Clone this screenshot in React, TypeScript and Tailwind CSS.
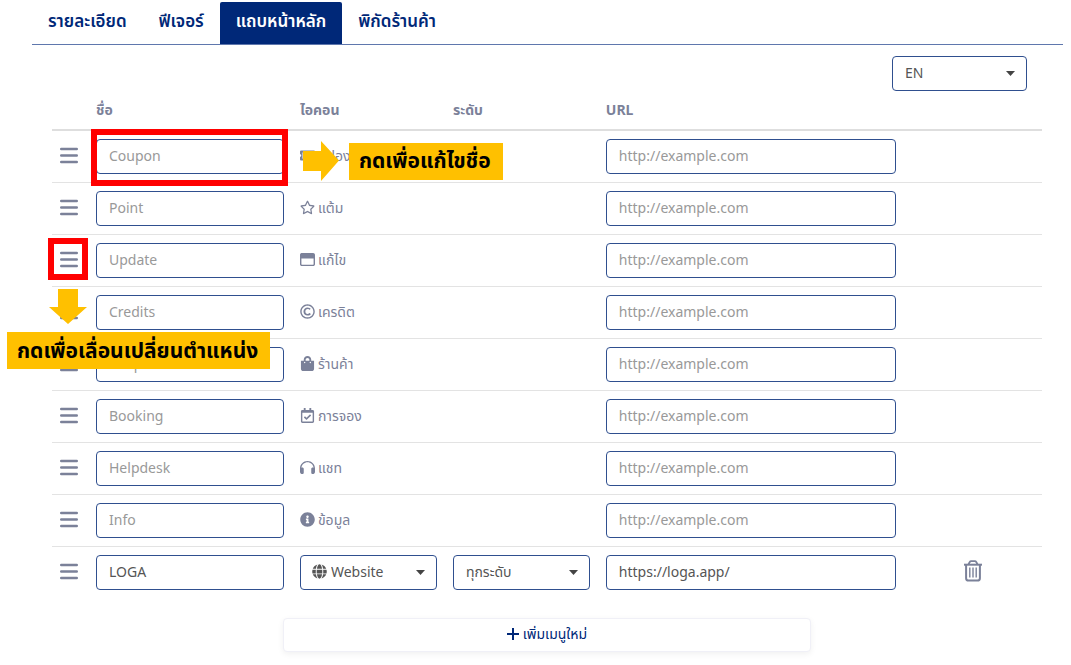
import { useState } from 'react';
import type { ReactNode } from 'react';
import { FaGlobe, FaInfoCircle, FaRegCalendarCheck, FaRegCopyright, FaRegStar, FaShoppingBag, FaTicketAlt } from 'react-icons/fa';
import { FaHeadphones, FaRegWindowMaximize } from 'react-icons/fa6';

type MenuRow = { name: string; icon: ReactNode; label: string };

const TABS = ['รายละเอียด', 'ฟีเจอร์', 'แถบหน้าหลัก', 'พิกัดร้านค้า'];

const ICON = 'h-[15px] w-auto';

const ROWS: MenuRow[] = [
  { name: 'Coupon', icon: <FaTicketAlt className={ICON} />, label: 'คูปอง' },
  { name: 'Point', icon: <FaRegStar className={ICON} />, label: 'แต้ม' },
  { name: 'Update', icon: <FaRegWindowMaximize className={ICON} />, label: 'แก้ไข' },
  { name: 'Credits', icon: <FaRegCopyright className={ICON} />, label: 'เครดิต' },
  { name: 'Shop', icon: <FaShoppingBag className={ICON} />, label: 'ร้านค้า' },
  { name: 'Booking', icon: <FaRegCalendarCheck className={ICON} />, label: 'การจอง' },
  { name: 'Helpdesk', icon: <FaHeadphones className={ICON} />, label: 'แชท' },
  { name: 'Info', icon: <FaInfoCircle className={ICON} />, label: 'ข้อมูล' },
];

const FIELD =
  'block h-[35px] w-full rounded border border-[#2f4f8f] bg-white px-3 pb-[2px] text-sm text-[#555] placeholder:text-[#999] focus:outline-none';

function DragHandle() {
  return (
    <button type="button" aria-label="Move" className="flex h-[35px] cursor-move items-center pb-[2px] text-[#7b8199]">
      <svg width="18" height="17" viewBox="0 0 18 17" stroke="currentColor" strokeWidth="2.4" strokeLinecap="round">
        <path d="M1.200 2h15.600M1.200 8.500h15.600M1.200 15h15.600" />
      </svg>
    </button>
  );
}

function TrashIcon() {
  return (
    <svg width="18" height="22" viewBox="0 0 18 22" fill="none" stroke="currentColor" strokeWidth="1.8">
      <path d="M0 4.700h18" strokeWidth="2" />
      <path d="M4.500 4.500 5.600 2.200Q6.200 1.200 7.200 1.200h3.600q1 0 1.600 1l1.100 2.300" />
      <path d="M2.100 5v13.200Q2.100 20.600 4.500 20.600h9q2.400 0 2.400-2.400V5" strokeWidth="2" />
      <path d="M5.800 7.500V17.500M9 7.500V17.500M12.200 7.500V17.500" strokeWidth="1.400" />
    </svg>
  );
}

function Select({ label, value, icon }: { label: string; value: string; icon?: ReactNode }) {
  return (
    <div className="relative">
      <select aria-label={label} className={`${FIELD} appearance-none ${icon ? 'pl-[30px]' : ''}`}>
        <option>{value}</option>
      </select>
      {icon && <span className="pointer-events-none absolute inset-y-0 left-3 flex items-center pb-[2px] text-[#555]">{icon}</span>}
      <span className="pointer-events-none absolute inset-y-0 right-3 flex items-center text-[#444]">
        <svg width="9" height="5" viewBox="0 0 9 5" fill="currentColor">
          <path d="M0 0h9L4.500 5z" />
        </svg>
      </span>
    </div>
  );
}

function Callout({ children }: { children: ReactNode }) {
  return (
    <p className="flex h-[37px] items-center bg-[#ffc000] pr-3 pb-[2px] pl-[10px] text-[21px] font-bold whitespace-nowrap text-black">
      {children}
    </p>
  );
}

export default function App() {
  const [active, setActive] = useState(2);
  return (
    <main className="bg-white pt-[2px] pr-2 pb-3 pl-8 font-['Noto_Sans','Noto_Sans_Thai',sans-serif] text-sm text-[#7b8199]">
      <nav className="flex border-b border-[#5f77ad]">
        {TABS.map((tab, i) => (
          <button
            key={tab}
            type="button"
            onClick={() => setActive(i)}
            className={`h-[42px] rounded-t-[2px] px-4 pb-1 text-[17px] font-semibold ${
              i === active ? 'bg-[#002878] text-white' : 'text-[#002878]'
            }`}
          >
            {tab}
          </button>
        ))}
      </nav>

      <section className="pt-[11px] pr-[21px] pl-5">
        <div className="flex justify-end pr-[15px]">
          <div className="w-[135px]">
            <Select label="Language" value="EN" />
          </div>
        </div>

        <table className="w-full table-fixed border-collapse text-left">
          <colgroup>
            <col className="w-9" />
            <col className="w-[20.6%]" />
            <col className="w-[15.45%]" />
            <col className="w-[15.45%]" />
            <col className="w-[30.9%]" />
            <col />
          </colgroup>
          <thead>
            <tr className="h-[39px] border-b-2 border-[#dedede]">
              <th aria-label="Order" />
              <th className="px-2 font-bold">ชื่อ</th>
              <th className="px-2 font-bold">ไอคอน</th>
              <th className="px-2 font-bold">ระดับ</th>
              <th className="px-2 font-bold">URL</th>
              <th aria-label="Actions" />
            </tr>
          </thead>
          <tbody>
            {ROWS.map((row, i) => (
              <tr key={row.name} className="border-b border-[#e3e3e3]">
                <td className="relative p-2">
                  <DragHandle />
                  {i === 2 && (
                    <div className="pointer-events-none absolute top-[3px] -left-1 z-10 h-[42px] w-10 border-6 border-[#ff0000]">
                      <svg width="38" height="35" viewBox="0 0 38 35" className="absolute top-[45px] -left-[5px]" fill="#ffc000">
                        <path d="M9 0h20v18h9L19 35 0 18h9z" />
                      </svg>
                      <div className="absolute top-[88px] -left-[47px]">
                        <Callout>กดเพื่อเลื่อนเปลี่ยนตำแหน่ง</Callout>
                      </div>
                    </div>
                  )}
                </td>
                <td className="relative p-2">
                  <input aria-label="ชื่อ" placeholder={row.name} className={FIELD} />
                  {i === 0 && (
                    <div className="pointer-events-none absolute -top-[2px] right-1 left-[3px] z-10 h-[57px] border-6 border-[#ff0000]">
                      <div className="absolute top-[6px] left-full ml-5 flex items-center">
                        <svg width="38" height="40" viewBox="0 0 38 40" fill="#ffc000">
                          <path d="M1 10h18V0l18 19.500L19 40V30H1z" />
                        </svg>
                        <div className="ml-[9px]">
                          <Callout>กดเพื่อแก้ไขชื่อ</Callout>
                        </div>
                      </div>
                    </div>
                  )}
                </td>
                <td className="p-2">
                  <span className="flex items-center gap-[3px] pb-[2px] whitespace-nowrap">
                    {row.icon}
                    {row.label}
                  </span>
                </td>
                <td />
                <td className="p-2">
                  <input aria-label="URL" placeholder="http://example.com" className={FIELD} />
                </td>
                <td />
              </tr>
            ))}
            <tr>
              <td className="p-2">
                <DragHandle />
              </td>
              <td className="p-2">
                <input aria-label="ชื่อ" defaultValue="LOGA" className={FIELD} />
              </td>
              <td className="p-2">
                <Select label="ไอคอน" value="Website" icon={<FaGlobe className={ICON} />} />
              </td>
              <td className="p-2">
                <Select label="ระดับ" value="ทุกระดับ" />
              </td>
              <td className="p-2">
                <input aria-label="URL" defaultValue="https://loga.app/" className={FIELD} />
              </td>
              <td className="p-2">
                <button type="button" aria-label="Delete" className="mx-auto flex pb-1">
                  <TrashIcon />
                </button>
              </td>
            </tr>
          </tbody>
        </table>

        <button
          type="button"
          className="mx-auto mt-5 flex h-[34px] w-[53.4%] items-center justify-center gap-1 rounded border border-[#f0f0f7] bg-white pb-[2px] text-[#002878] shadow-[0_2px_6px_rgba(0,0,0,0.06)]"
        >
          <svg width="12" height="12" viewBox="0 0 12 12" stroke="currentColor" strokeWidth="2">
            <path d="M6 0v12M0 6h12" />
          </svg>
          เพิ่มเมนูใหม่
        </button>
      </section>
    </main>
  );
}
